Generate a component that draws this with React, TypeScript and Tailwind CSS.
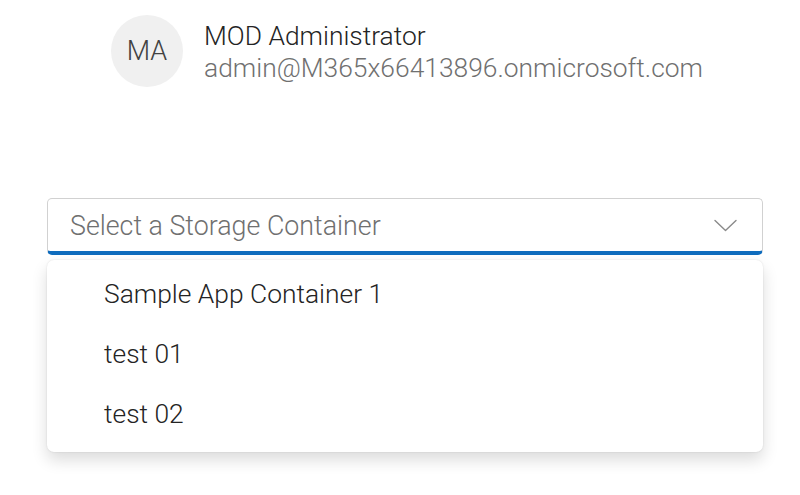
const containers = ["Sample App Container 1", "test 01", "test 02"];

function Chevron() {
  return (
    <svg width="23" height="13" viewBox="0 0 23 13" fill="none" aria-hidden="true">
      <path d="M1 1.5 11.5 11.5 22 1.5" stroke="#8a8a8a" strokeWidth="1.4" strokeLinecap="round" strokeLinejoin="round" />
    </svg>
  );
}

export default function App() {
  return (
    <div className="h-[495px] w-[800px] overflow-hidden bg-white font-['Roboto',sans-serif] font-light text-[#242424]">
      <div className="flex items-center gap-[21px] pl-[111px] pt-[15px]">
        <div className="flex h-[72px] w-[72px] items-center justify-center rounded-full bg-[#f0f0f0] text-[27px] text-[#424242]">
          MA
        </div>
        <div className="mt-[2px] flex flex-col leading-[32px]">
          <span className="text-[26.4px]">MOD Administrator</span>
          <span className="text-[26.4px] text-[#707070]">admin@M365x66413896.onmicrosoft.com</span>
        </div>
      </div>

      <div className="mx-[47px] mt-[111px] w-[716px]">
        <button
          type="button"
          className="flex h-[57px] w-full items-center justify-between rounded-[5px] border border-[#d1d1d1] border-b-[4px] border-b-[#0f6cbd] pl-[22px] pr-[25px] text-left"
        >
          <span className="mt-[3px] text-[26.8px] text-[#707070]">Select a Storage Container</span>
          <Chevron />
        </button>

        <ul className="mt-[5px] rounded-[7px] bg-white pb-[7px] pt-[5px] shadow-[0_8px_16px_rgba(0,0,0,0.14),0_0_2px_rgba(0,0,0,0.12)]">
          {containers.map((name) => (
            <li key={name} className="flex h-[60px] items-center pl-[57px] text-[26.4px]">
              {name}
            </li>
          ))}
        </ul>
      </div>
    </div>
  );
}
